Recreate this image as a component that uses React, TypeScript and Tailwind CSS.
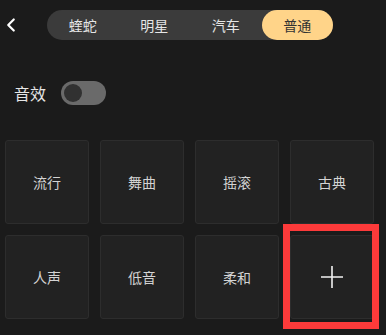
import { ChevronLeft } from "lucide-react";

const tabs = ["蝰蛇", "明星", "汽车", "普通"];
const presets = ["流行", "舞曲", "摇滚", "古典", "人声", "低音", "柔和"];

export default function App() {
  return (
    <div
      className="w-[386px] h-[335px] bg-[#1b1b1b] text-[#e2e2e2] overflow-hidden"
      style={{ fontFamily: '"Noto Sans CJK SC", "Noto Sans", sans-serif' }}
    >
      <div className="flex items-center h-[30px] mt-[10px]">
        <div className="w-[47px] flex items-center">
          <ChevronLeft size={22} strokeWidth={2.4} className="text-white" />
        </div>
        <div className="flex w-[286px] h-[30px] rounded-full bg-[#3b3b3b]">
          {tabs.map((t, i) => (
            <div
              key={t}
              className={
                i === 3
                  ? "flex-1 flex items-center justify-center rounded-full bg-[#ffd489] text-[#333] text-[14px]"
                  : "flex-1 flex items-center justify-center text-[14px] text-[#e6e6e6]"
              }
            >
              {t}
            </div>
          ))}
        </div>
      </div>

      <div className="flex items-center gap-[15px] mt-[41px] pl-[14px]">
        <span className="text-[16px] text-[#e6e6e6]">音效</span>
        <div className="w-[45px] h-[24px] rounded-full bg-[#6a6a6a] flex items-center px-[3px]">
          <div className="w-[18px] h-[18px] rounded-full bg-[#313131]" />
        </div>
      </div>

      <div className="grid grid-cols-[repeat(4,84px)] gap-[11px] pl-[5px] mt-[35px]">
        {presets.map((p) => (
          <div
            key={p}
            className="h-[84px] rounded-[3px] bg-[#222222] border border-[#2d2d2d] flex items-center justify-center text-[14px] text-[#d4d4d4]"
          >
            {p}
          </div>
        ))}
        <div className="relative h-[84px] rounded-[3px] bg-[#222222] border border-[#2d2d2d] flex items-center justify-center">
          <svg width="24" height="24" viewBox="0 0 24 24">
            <path d="M12 1v22M1 12h22" stroke="#f2f2f2" strokeWidth="1.6" />
          </svg>
          <div className="absolute left-[-8px] top-[-12px] w-[96px] h-[105px] border-[7px] border-[#fd3a3a]" />
        </div>
      </div>
    </div>
  );
}
